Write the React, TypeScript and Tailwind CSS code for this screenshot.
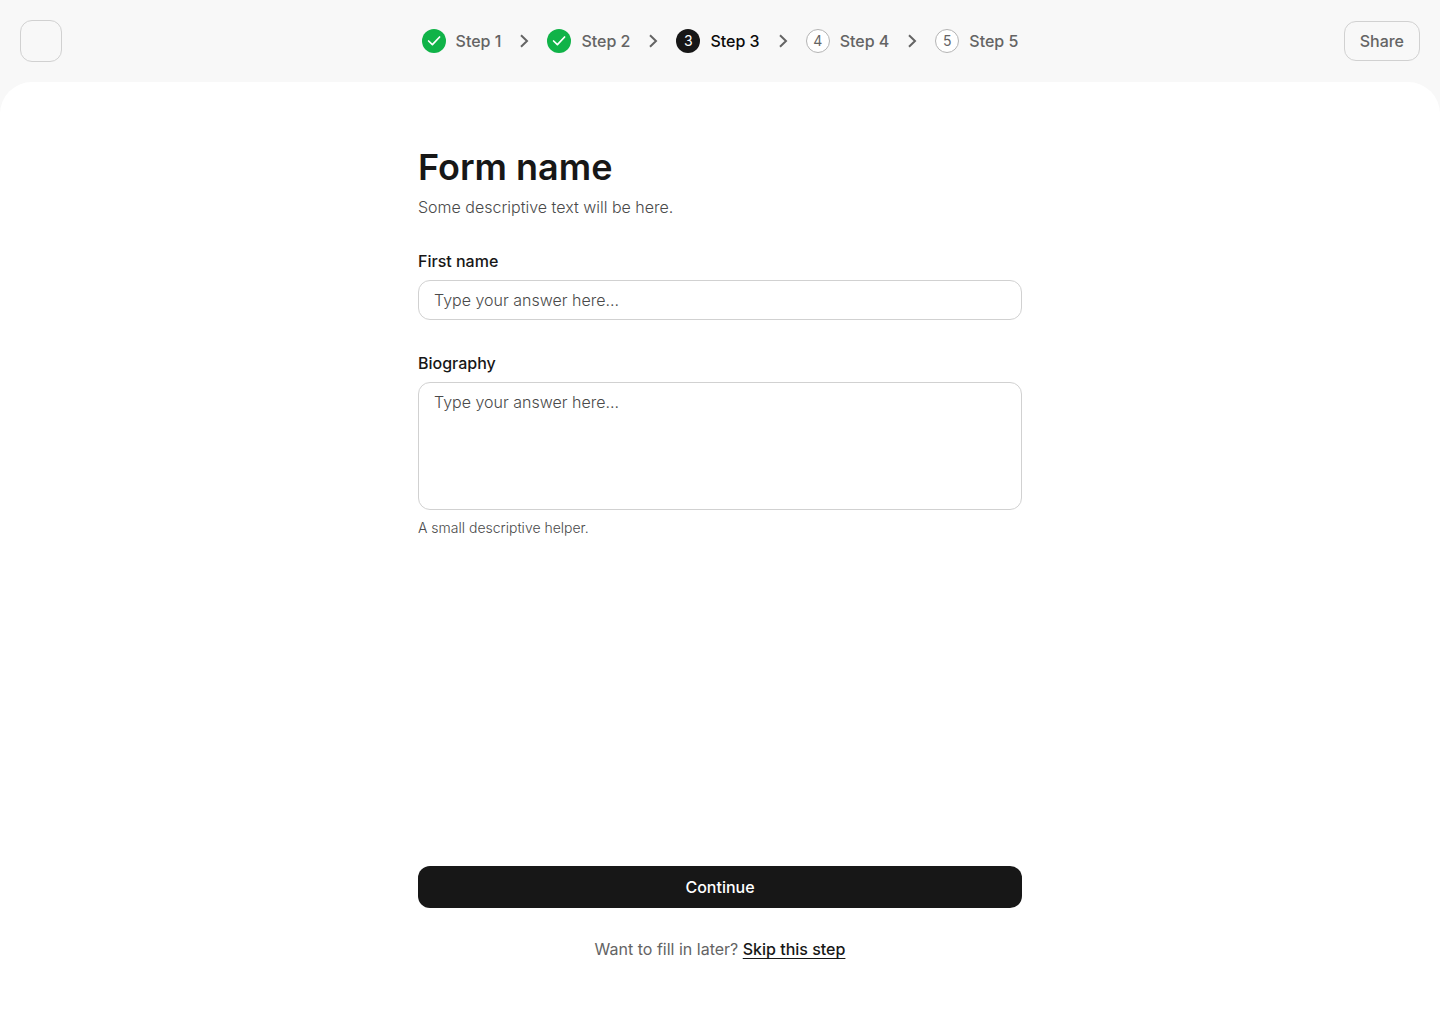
import { Fragment, useState } from "react";
import type { FormEvent } from "react";
import clsx from "clsx";

type StepStatus = "done" | "current" | "upcoming";

const STEPS: Array<{ id: number; label: string; status: StepStatus }> = [
  { id: 1, label: "Step 1", status: "done" },
  { id: 2, label: "Step 2", status: "done" },
  { id: 3, label: "Step 3", status: "current" },
  { id: 4, label: "Step 4", status: "upcoming" },
  { id: 5, label: "Step 5", status: "upcoming" },
];

const fieldClass =
  "block w-full rounded-xl border border-[#d1d1d1] bg-white px-[15px] text-base leading-[22px] font-light text-[#171717] placeholder:text-[#4a4a4a] focus:border-[#171717] focus:outline-none";

function CheckIcon() {
  return (
    <svg viewBox="0 0 24 24" fill="none" className="size-6" aria-hidden="true">
      <path
        d="M6.6 12 10.4 15.6 17.6 8"
        stroke="currentColor"
        strokeWidth="1.7"
        strokeLinecap="round"
        strokeLinejoin="round"
      />
    </svg>
  );
}

function ChevronIcon() {
  return (
    <svg viewBox="0 0 16 16" fill="none" className="size-4 shrink-0 text-[#646464]" aria-hidden="true">
      <path d="M5 2.2 11 8 5 13.8" stroke="currentColor" strokeWidth="2" />
    </svg>
  );
}

function StepBadge(props: { id: number; status: StepStatus }) {
  return (
    <span
      className={clsx(
        "flex size-6 items-center justify-center rounded-full text-sm font-normal",
        props.status === "done" && "bg-[#10b348] text-white",
        props.status === "current" && "bg-[#171717] text-white",
        props.status === "upcoming" && "border border-[#b4b4b4] bg-white text-[#646464]",
      )}
    >
      {props.status === "done" ? <CheckIcon /> : props.id}
    </span>
  );
}

function Stepper() {
  return (
    <nav aria-label="Progress" className="flex items-center gap-[15px]">
      {STEPS.map((step, i) => (
        <Fragment key={step.id}>
          {i > 0 && <ChevronIcon />}
          <a
            href={`#step-${step.id}`}
            aria-current={step.status === "current" ? "step" : undefined}
            className={clsx(
              "flex items-center gap-2.5 whitespace-nowrap font-medium",
              step.status === "current" ? "text-[#0a0a0a]" : "text-[#646464]",
            )}
          >
            <StepBadge id={step.id} status={step.status} />
            {step.label}
          </a>
        </Fragment>
      ))}
    </nav>
  );
}

export default function App() {
  const [firstName, setFirstName] = useState("");
  const [biography, setBiography] = useState("");

  function handleSubmit(e: FormEvent) {
    e.preventDefault();
  }

  return (
    <div className="flex min-h-screen flex-col bg-[#f8f8f8] font-['Inter',sans-serif] text-base leading-[22px] text-[#171717]">
      <header className="grid grid-cols-[1fr_auto_1fr] items-center p-5">
        <a
          href="#home"
          aria-label="Home"
          className="size-[42px] rounded-xl border border-[#d1d1d1]"
        />
        <Stepper />
        <button
          type="button"
          className="h-10 justify-self-end rounded-xl border border-[#d1d1d1] px-[15px] font-medium text-[#646464]"
        >
          Share
        </button>
      </header>

      <main className="flex grow flex-col rounded-t-[32px] bg-white px-5 py-16">
        <form
          onSubmit={handleSubmit}
          className="mx-auto flex w-full max-w-[604px] grow flex-col"
        >
          <h1 className="text-4xl leading-[42px] font-semibold">Form name</h1>
          <p className="mt-2 font-light text-[#4a4a4a]">Some descriptive text will be here.</p>

          <div className="mt-8">
            <label htmlFor="first-name" className="block font-medium">
              First name
            </label>
            <input
              id="first-name"
              type="text"
              value={firstName}
              onChange={(e) => setFirstName(e.target.value)}
              placeholder="Type your answer here..."
              className={clsx(fieldClass, "mt-2 h-10")}
            />
          </div>

          <div className="mt-8">
            <label htmlFor="biography" className="block font-medium">
              Biography
            </label>
            <textarea
              id="biography"
              value={biography}
              onChange={(e) => setBiography(e.target.value)}
              placeholder="Type your answer here..."
              aria-describedby="biography-help"
              className={clsx(fieldClass, "mt-2 h-32 resize-none py-2")}
            />
            <p id="biography-help" className="mt-2 text-sm leading-5 font-light text-[#4a4a4a]">
              A small descriptive helper.
            </p>
          </div>

          <div className="mt-auto pt-8">
            <button
              type="submit"
              className="h-[42px] w-full rounded-xl bg-[#171717] font-medium text-white"
            >
              Continue
            </button>
            <p className="mt-[30px] text-center text-[#646464]">
              Want to fill in later?{" "}
              <a
                href="#skip"
                className="font-medium text-[#171717] underline underline-offset-[3px]"
              >
                Skip this step
              </a>
            </p>
          </div>
        </form>
      </main>
    </div>
  );
}
